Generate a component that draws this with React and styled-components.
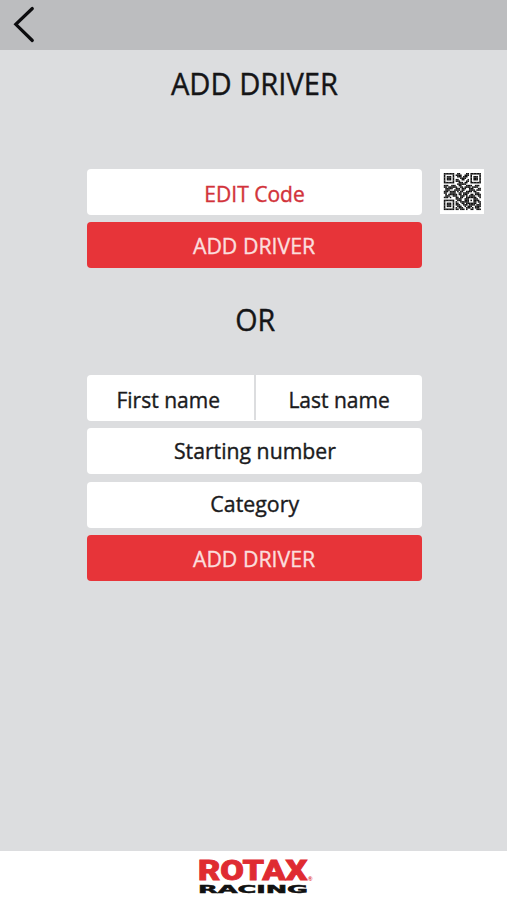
import React from "react";
import styled, { createGlobalStyle } from "styled-components";

const GlobalStyle = createGlobalStyle`
  * { box-sizing: border-box; }
  body { margin: 0; background: #dcdddf; }
`;

const Screen = styled.div`
  width: 507px;
  height: 900px;
  display: flex;
  flex-direction: column;
  background: #dcdddf;
  color: #151517;
  font-family: "Open Sans", "Noto Sans", sans-serif;
  overflow: hidden;
`;

const TopBar = styled.header`
  height: 50px;
  flex: none;
  background: #bcbdbf;
`;

const BackButton = styled.button`
  display: block;
  width: 48px;
  height: 50px;
  padding: 0;
  border: 0;
  background: none;
  svg { display: block; }
`;

const Content = styled.main`
  flex: 1;
  padding: 0 85px 0 87px;
`;

const Heading = styled.h1`
  margin: 0;
  height: ${(p) => p.$height}px;
  padding-top: ${(p) => p.$top}px;
  padding-left: ${(p) => p.$indent || 0}px;
  font-size: 30.5px;
  line-height: 42px;
  font-weight: 400;
  text-align: center;
`;

const Label = styled.span`
  display: inline-block;
  white-space: nowrap;
  transform: scaleX(${(p) => p.$stretch || 0.955});
  -webkit-text-stroke: 0.4px currentColor;
`;

const Stack = styled.section`
  display: flex;
  flex-direction: column;
  gap: ${(p) => p.$gap}px;
`;

const CodeRow = styled.div`
  display: flex;
  gap: 18px;
  width: 397px;
`;

const Field = styled.div`
  display: flex;
  justify-content: center;
  width: 335px;
  height: 46px;
  border-radius: 4px;
  background: #fff;
  color: ${(p) => (p.$accent ? "#d2333b" : "#1b1b1d")};
  font-size: 22px;
  line-height: ${(p) => p.$line || 46}px;
`;

const Half = styled.div`
  width: ${(p) => p.$width}px;
  height: 45px;
  padding-right: ${(p) => p.$inset || 0}px;
  text-align: center;
  & + & { border-left: 2px solid #dcdddf; }
`;

const SubmitButton = styled.button`
  width: 335px;
  height: 46px;
  padding: 0;
  border: 0;
  border-radius: 4px;
  background: #e73439;
  color: #fbdedd;
  font: 400 22px/${(p) => p.$line || 46}px "Open Sans", "Noto Sans", sans-serif;
`;

const QrTile = styled.div`
  width: 44px;
  height: 45px;
  background: #fff;
  svg { display: block; }
`;

const Footer = styled.footer`
  height: 49px;
  flex: none;
  display: flex;
  justify-content: center;
  background: #fff;
`;

const QR_ROWS = [
  "1111111001100001101111111",
  "1000001011110011101000001",
  "1011101001110111001011101",
  "1011101000011110001011101",
  "1011101011001100101011101",
  "1000001011100001101000001",
  "1111111000111011001111111",
  "0000000001111110000000000",
  "1110011100110001111001110",
  "1101111110011011110111100",
  "0111110011101110011100011",
  "0111000111101100011110111",
  "1110111101011001111011000",
  "1100111100110111100001110",
  "0101111110110111001101111",
  "0111001110011101011110011",
  "1110100011011001111111001",
  "0000000011110011100011100",
  "1111111001110011101011110",
  "1000001010011111100011011",
  "1011101011001101111111001",
  "1011101011100111011110111",
  "1011101001110010111001111",
  "1000001010111001110101110",
  "1111111011011101001100111",
];

function QrCode() {
  return (
    <svg width="44" height="45" viewBox="0 0 44 45">
      <g transform="translate(3.8 4) scale(1.48)" fill="#111">
        {QR_ROWS.flatMap((row, y) =>
          [...row].map((m, x) =>
            m === "1" ? <rect key={x + "-" + y} x={x} y={y} width="1.05" height="1.05" /> : null
          )
        )}
      </g>
    </svg>
  );
}

function Logo() {
  return (
    <svg width="120" height="49" viewBox="194 851 120 49">
      <text x="198" y="879.8" textLength="109.5" lengthAdjust="spacingAndGlyphs" fill="#df2b31" stroke="#df2b31" strokeWidth="0.8" fontFamily="Roboto" fontWeight="900" fontSize="28">ROTAX</text>
      <text x="308" y="881" fill="#df2b31" fontFamily="Liberation Sans" fontWeight="700" fontSize="6">®</text>
      <text x="198" y="893" textLength="110" lengthAdjust="spacingAndGlyphs" fill="#111" stroke="#111" strokeWidth="0.5" fontFamily="DejaVu Sans" fontWeight="700" fontSize="11.2">RACING</text>
    </svg>
  );
}

export default function App() {
  return (
    <>
      <GlobalStyle />
      <Screen>
        <TopBar>
          <BackButton aria-label="Back">
            <svg width="48" height="50" viewBox="0 0 48 50" fill="none" stroke="#0c0c0e" strokeWidth="3.2" strokeLinecap="round" strokeLinejoin="miter">
              <path d="M32.3 8.5 L15.8 24.3 L32.3 40.5" />
            </svg>
          </BackButton>
        </TopBar>
        <Content>
          <Heading $height={119} $top={12}><Label>ADD DRIVER</Label></Heading>
          <Stack $gap={7}>
            <CodeRow>
              <Field $accent $line={49}><Label>EDIT Code</Label></Field>
              <QrTile><QrCode /></QrTile>
            </CodeRow>
            <SubmitButton $line={44}><Label $stretch={0.97}>ADD DRIVER</Label></SubmitButton>
          </Stack>
          <Heading as="h2" $height={106.5} $top={30} $indent={2}><Label $stretch={0.94}>OR</Label></Heading>
          <Stack $gap={7.6}>
            <Field $line={48}>
              <Half $width={167} $inset={4}><Label>First name</Label></Half>
              <Half $width={168}><Label>Last name</Label></Half>
            </Field>
            <Field $line={45}><Label $stretch={0.965}>Starting number</Label></Field>
            <Field $line={43}><Label $stretch={0.97}>Category</Label></Field>
            <SubmitButton><Label $stretch={0.97}>ADD DRIVER</Label></SubmitButton>
          </Stack>
        </Content>
        <Footer><Logo /></Footer>
      </Screen>
    </>
  );
}
